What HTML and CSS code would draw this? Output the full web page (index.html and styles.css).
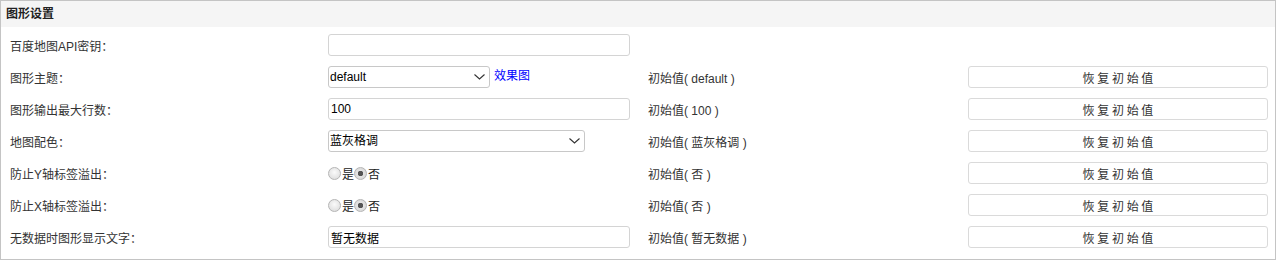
FILE: index.html
```html
<!DOCTYPE html>
<html lang="zh-CN">
  <head>
    <meta charset="UTF-8" />
    <title>图形设置</title>
    <link rel="stylesheet" href="styles.css">
  </head>
  <body>
    <div class="panel">
      <div class="panel-title">图形设置</div>
      <div class="settings">
        <div class="row">
          <label class="name">百度地图API密钥：</label>
          <div class="ctrl"><input class="text" type="text" value=""></div>
          <div class="init"></div>
          <div class="act"></div>
        </div>

        <div class="row">
          <label class="name">图形主题：</label>
          <div class="ctrl">
            <span class="pick-wrap">
              <select class="pick pick-sm"><option>default</option></select>
              <svg class="caret" width="11" height="6" viewBox="0 0 11 6"><path d="M0.5 0.5 L5.5 5 L10.5 0.5" fill="none" stroke="#333" stroke-width="1.1"/></svg>
            </span>
            <a class="demo" href="#">效果图</a>
          </div>
          <div class="init">初始值( default )</div>
          <div class="act"><button class="reset">恢 复 初 始 值</button></div>
        </div>

        <div class="row">
          <label class="name">图形输出最大行数：</label>
          <div class="ctrl"><input class="text" type="text" value="100"></div>
          <div class="init">初始值( 100 )</div>
          <div class="act"><button class="reset">恢 复 初 始 值</button></div>
        </div>

        <div class="row">
          <label class="name">地图配色：</label>
          <div class="ctrl">
            <span class="pick-wrap">
              <select class="pick pick-md"><option>蓝灰格调</option></select>
              <svg class="caret" width="11" height="6" viewBox="0 0 11 6"><path d="M0.5 0.5 L5.5 5 L10.5 0.5" fill="none" stroke="#333" stroke-width="1.1"/></svg>
            </span>
          </div>
          <div class="init">初始值( 蓝灰格调 )</div>
          <div class="act"><button class="reset">恢 复 初 始 值</button></div>
        </div>

        <div class="row">
          <label class="name">防止Y轴标签溢出：</label>
          <div class="ctrl radios">
            <input type="radio" name="ylabel"><span>是</span><input type="radio" name="ylabel" checked><span>否</span>
          </div>
          <div class="init">初始值( 否 )</div>
          <div class="act"><button class="reset">恢 复 初 始 值</button></div>
        </div>

        <div class="row">
          <label class="name">防止X轴标签溢出：</label>
          <div class="ctrl radios">
            <input type="radio" name="xlabel"><span>是</span><input type="radio" name="xlabel" checked><span>否</span>
          </div>
          <div class="init">初始值( 否 )</div>
          <div class="act"><button class="reset">恢 复 初 始 值</button></div>
        </div>

        <div class="row">
          <label class="name">无数据时图形显示文字：</label>
          <div class="ctrl"><input class="text" type="text" value="暂无数据"></div>
          <div class="init">初始值( 暂无数据 )</div>
          <div class="act"><button class="reset">恢 复 初 始 值</button></div>
        </div>
      </div>
    </div>
  </body>
</html>
```

FILE: styles.css
```css
html,
body {
  margin: 0;
  padding: 0;
  background: #fff;
}

body {
  font-family: "Liberation Sans", "Noto Sans CJK SC", sans-serif;
  font-size: 12px;
  color: #333;
}

.panel {
  width: 1274px;
  height: 258px;
  border: 1px solid #c4c4c4;
}

.panel-title {
  height: 26px;
  line-height: 26px;
  padding-left: 5px;
  background: #f5f5f5;
  font-weight: bold;
  font-size: 12px;
  color: #222;
}

.settings {
  padding: 2px 0 0 9px;
}

.row {
  display: grid;
  grid-template-columns: 318px 320px 320px 300px;
  height: 32px;
  align-items: center;
}

.ctrl {
  display: flex;
  align-items: center;
}

.text {
  box-sizing: border-box;
  width: 302px;
  height: 22px;
  margin: 0;
  padding: 0 2px;
  border: 1px solid #d4d4d4;
  border-radius: 3px;
  font-family: "Liberation Sans", "Noto Sans CJK SC", sans-serif;
  font-size: 12px;
  color: #000;
  outline: none;
}

.pick-wrap {
  position: relative;
  display: flex;
}

.pick {
  appearance: none;
  box-sizing: border-box;
  height: 22px;
  margin: 0;
  padding: 0 0 0 1px;
  border: 1px solid #c8c8c8;
  border-radius: 3px;
  background: #fff;
  font-family: "Liberation Sans", "Noto Sans CJK SC", sans-serif;
  font-size: 12px;
  color: #000;
}

.caret {
  position: absolute;
  right: 5px;
  top: 8px;
  pointer-events: none;
}

.pick-sm {
  width: 162px;
}

.pick-md {
  width: 257px;
}

.demo {
  margin: -6px 0 0 4px;
  color: #00f;
  text-decoration: none;
}

.radios span {
  color: #222;
}

.radios input {
  appearance: none;
  box-sizing: border-box;
  width: 13px;
  height: 13px;
  margin: 0 1px 0 0;
  border: 1px solid #b5b5b5;
  border-radius: 50%;
  background: radial-gradient(circle at 50% 40%, #fafafa, #d8d8d8);
}

.radios input:checked {
  background: radial-gradient(circle, #555 0 2.5px, #e4e4e4 3px, #d0d0d0);
}

.reset {
  box-sizing: border-box;
  width: 300px;
  height: 22px;
  margin: 0;
  border: 1px solid #dadada;
  border-radius: 3px;
  background: #fff;
  font-family: "Noto Sans CJK SC", sans-serif;
  font-size: 12px;
  color: #333;
  padding: 0;
}
```
